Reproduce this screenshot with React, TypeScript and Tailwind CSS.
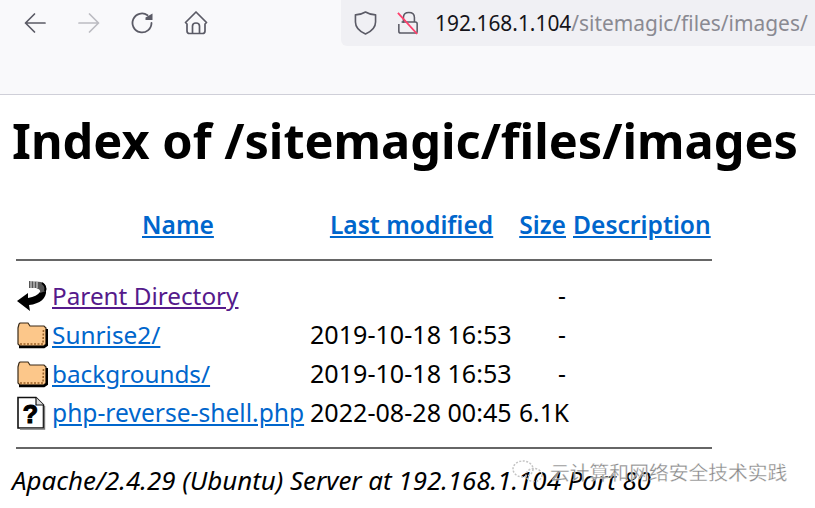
const font = { fontFamily: '"Noto Sans", "Open Sans", sans-serif' };

function FolderIcon() {
  return (
    <svg width="32" height="32" viewBox="0 0 32 32">
      <path d="M2 9 L3 5 L4 4 L12 4 L14 7 L28 7 L30 9 L30 25 L28 27 L4 27 L2 25 Z" fill="#fcc78a" stroke="#3a2a18" strokeWidth="1.2" />
      <path d="M3 28 L28 28 L31 26 L31 10" fill="none" stroke="#000" strokeWidth="2.4" />
      <path d="M4 25 L27 25 L27.5 10" fill="none" stroke="#9a6228" strokeWidth="1.6" strokeDasharray="2 1.5" />
    </svg>
  );
}

function BackIcon() {
  return (
    <svg width="32" height="32" viewBox="0 0 32 32">
      <path d="M1 21 L12 13 L12 18 C18 17 22 15 24 12 L30 10 C31 18 24 24 13 25 L14 31 Z" fill="#000" />
      <path d="M13 1 L25 2 C29 3 31 7 30 11 L24 13 C25 9 22 9 20 8 L13 8 Z" fill="#555" />
      <path d="M15 1 V8 M18 1 V8 M21 2 V8" stroke="#ddd" strokeWidth="1.1" />
      <path d="M26 3 C29 5 30 8 29 11" stroke="#000" strokeWidth="2" fill="none" />
    </svg>
  );
}

function UnknownIcon() {
  return (
    <svg width="30" height="34" viewBox="0 0 30 34">
      <path d="M2 1.5 H20 L27.5 9 V32 H2 Z" fill="#fff" stroke="#111" strokeWidth="1.6" />
      <path d="M20 1.5 V9 H27.5" fill="#ddd" stroke="#111" strokeWidth="1.2" />
      <path d="M28.5 10 V33 H4" fill="none" stroke="#777" strokeWidth="1.4" />
      <text x="14.5" y="27" textAnchor="middle" fontSize="25" fontWeight="900" fontFamily="Liberation Sans, sans-serif" fill="#000" stroke="#000" strokeWidth="1.2">?</text>
    </svg>
  );
}

function Toolbar() {
  return (
    <div className="flex h-[95px] border-b border-[#cfcfd8] bg-[#f9f9fb]">
      <div className="flex w-[341px] shrink-0 items-start pl-[23px] pt-[11px] text-[#5b5b66]">
        <svg width="24" height="24" viewBox="0 0 24 24" fill="none" stroke="currentColor" strokeWidth="1.7" strokeLinecap="round" strokeLinejoin="round">
          <path d="M2.5 12 H22 M11.5 3 L2.5 12 L11.5 21" />
        </svg>
        <svg className="ml-[30px] text-[#bcbcc2]" width="24" height="24" viewBox="0 0 24 24" fill="none" stroke="currentColor" strokeWidth="1.7" strokeLinecap="round" strokeLinejoin="round">
          <path d="M2 12 H21.5 M12.5 3 L21.5 12 L12.5 21" />
        </svg>
        <svg className="ml-[30px]" width="24" height="24" viewBox="0 0 24 24" fill="none" stroke="currentColor" strokeWidth="1.8" strokeLinecap="round">
          <path d="M20.5 12 A9.5 9.5 0 1 1 16.5 4.2" />
          <path d="M14.5 6.5 L21.5 2.5 L21.5 9 L14.5 9 Z" fill="currentColor" stroke="none" />
        </svg>
        <svg className="ml-[29px]" width="24" height="24" viewBox="0 0 24 24" fill="none" stroke="currentColor" strokeWidth="1.7" strokeLinejoin="round">
          <path d="M1.5 11.5 L12 1 L22.5 11.5 L21 13 V20 Q21 22.5 18.5 22.5 H5.5 Q3 22.5 3 20 V13 Z" />
          <path d="M8.5 22.5 V15 Q8.5 12 12 12 Q15.5 12 15.5 15 V22.5" />
        </svg>
      </div>
      <div className="flex h-[46px] flex-1 items-center overflow-hidden rounded-bl-[6px] bg-[#f0f0f4] pl-[13px]">
        <svg className="shrink-0 text-[#5b5b66]" width="23" height="26" viewBox="0 0 24 26" fill="none" stroke="currentColor" strokeWidth="1.7" strokeLinejoin="round">
          <path d="M12 1.5 Q17 4.5 22.5 4.5 V12 Q22.5 20 12 24.5 Q1.5 20 1.5 12 V4.5 Q7 4.5 12 1.5 Z" />
        </svg>
        <svg className="ml-[20px] shrink-0" width="22" height="26" viewBox="0 0 24 26" fill="none">
          <path d="M7 13 V7 Q7 1.5 13 1.5 Q19 1.5 19 7 V12 M5 12 H20 Q22 12 22 14 V22 Q22 24 20 24 H4 Q2 24 2 22 V14" stroke="#5b5b66" strokeWidth="1.7" />
          <path d="M1 2 L22 25" stroke="#ff3f6c" strokeWidth="2" />
        </svg>
        <span className="ml-[16px] whitespace-nowrap text-[20.9px] leading-none text-[#15141a]" style={font}>
          192.168.1.104<span className="text-[#8a8a92]">/sitemagic/files/images/</span>
        </span>
      </div>
    </div>
  );
}

const rows = [
  { icon: <BackIcon />, name: 'Parent Directory', date: '', size: '-', color: 'text-[#551a8b] text-[24.3px]' },
  { icon: <FolderIcon />, name: 'Sunrise2/', date: '2019-10-18 16:53', size: '-', color: 'text-[#0066cc] text-[24.4px]' },
  { icon: <FolderIcon />, name: 'backgrounds/', date: '2019-10-18 16:53', size: '-', color: 'text-[#0066cc] text-[24.3px]' },
  { icon: <UnknownIcon />, name: 'php-reverse-shell.php', date: '2022-08-28 00:45', size: '6.1K', color: 'text-[#0066cc]' },
];

export default function App() {
  return (
    <div className="relative h-[508px] w-[815px] overflow-hidden bg-white text-black" style={font}>
      <Toolbar />
      <h1 className="ml-[12px] mt-[13px] whitespace-nowrap text-[48.7px] font-bold leading-[65px]">
        Index of /sitemagic/files/images
      </h1>

      <div className="ml-[16px] mt-[32px] w-[696px] text-[24.6px] leading-[33px]">
        <div className="flex h-[39px] items-center whitespace-nowrap text-[24.6px] font-semibold text-[#0066cc]">
          <a className="ml-[126px] underline">Name</a>
          <a className="ml-[116px] underline">Last modified</a>
          <a className="ml-[26px] underline">Size</a>
          <a className="ml-[7px] underline">Description</a>
        </div>
        <div className="mt-[15px] h-[2px] bg-[#666]" />
        <div className="mt-[15px] flex flex-col">
          {rows.map((row) => (
            <div key={row.name} className="flex h-[39px] items-center whitespace-nowrap">
              <div className="flex w-[36px] shrink-0 items-center">{row.icon}</div>
              <a className={`w-[258px] shrink-0 underline ${row.color}`}>{row.name}</a>
              <span className="w-[209px] shrink-0 text-[25.1px]">{row.date}</span>
              <span className={row.size === '-' ? 'ml-[39px]' : ''}>{row.size}</span>
            </div>
          ))}
        </div>
        <div className="mt-[15px] h-[2px] bg-[#666]" />
      </div>

      <div className="ml-[12px] mt-[15px] whitespace-nowrap text-[25.9px] italic leading-[33px]">
        Apache/2.4.29 (Ubuntu) Server at 192.168.1.104 Port 80
      </div>

      <div className="absolute left-[510px] top-[459px] flex items-center">
        <svg width="36" height="26" viewBox="0 0 36 26" fill="none" stroke="#c4c4c4" strokeWidth="1.5" strokeDasharray="2 1.5">
          <ellipse cx="13" cy="10" rx="10" ry="8" />
          <ellipse cx="24" cy="16" rx="8" ry="6.5" />
        </svg>
        <span
          className="ml-[4px] whitespace-nowrap text-[19.8px] leading-none text-[#888]"
          style={{ fontFamily: '"Noto Sans CJK SC", sans-serif', WebkitTextStroke: '0.3px #fff' }}
        >
          云计算和网络安全技术实践
        </span>
      </div>
    </div>
  );
}
